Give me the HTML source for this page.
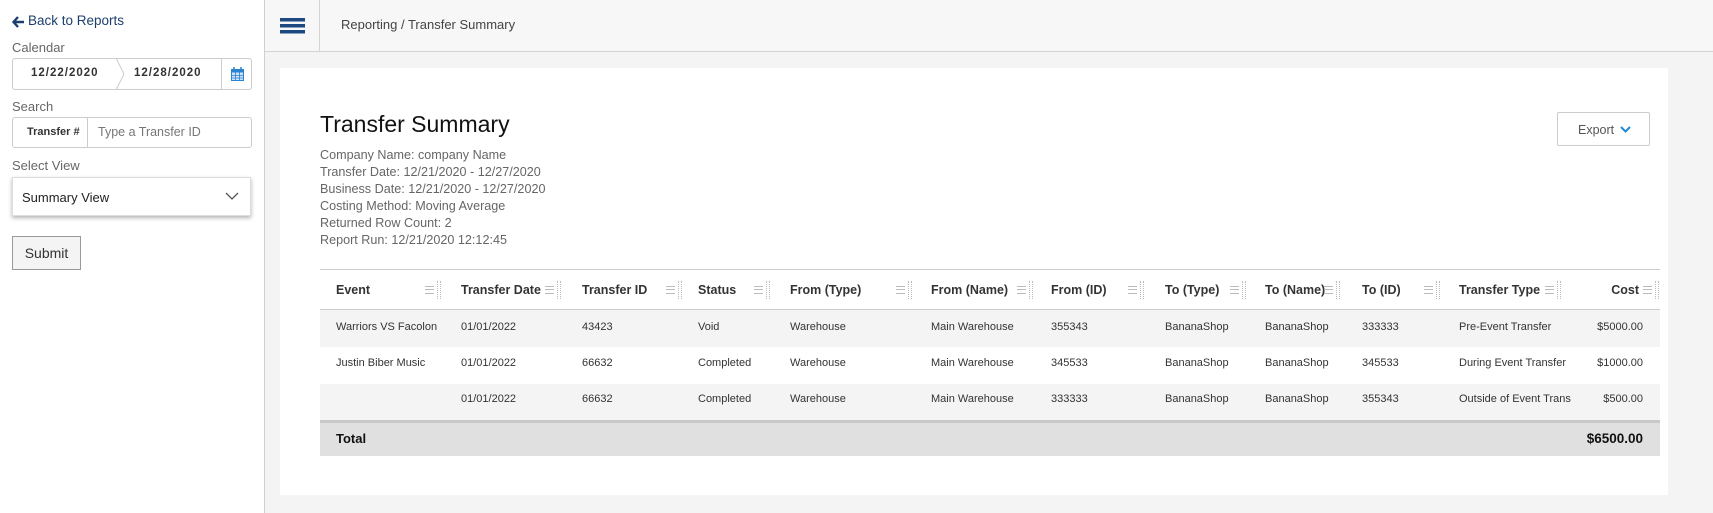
<!DOCTYPE html>
<html><head><meta charset="utf-8"><style>
*{box-sizing:border-box;margin:0;padding:0}
body{width:1713px;height:513px;overflow:hidden;background:#f4f4f4;font-family:"Liberation Sans",sans-serif;position:relative;color:#222}
.a{position:absolute;white-space:nowrap}
#side{position:absolute;left:0;top:0;width:265px;height:513px;background:#fff;border-right:1px solid #d0d0d0}
#top{position:absolute;left:265px;top:0;right:0;height:52px;background:#f7f7f7;border-bottom:1px solid #d4d4d4}
.lbl{font-size:13px;color:#666}
.box{border:1px solid #ccc;border-radius:3px;background:#fff}
.hd{font-size:12.5px;font-weight:bold;color:#333}
.cell{font-size:11px;color:#333}
.mi{position:absolute;width:9px;height:8px;border-top:1.5px solid #bbb;border-bottom:1.5px solid #bbb}
.mi:after{content:"";position:absolute;left:0;right:0;top:1.8px;border-top:1.5px solid #bbb}
.dt{position:absolute;width:4px;height:18px;border-left:1px dotted #bbb;border-right:1px dotted #bbb}
</style></head><body>
<div id="side">
 <svg class="a" style="left:12px;top:16px" width="13" height="12"><path d="M6 1L1.5 6 6 11M2 6h10" fill="none" stroke="#1c3f6e" stroke-width="2.4"/></svg>
 <div class="a" style="left:28px;top:13px;font-size:13.5px;color:#1c3f6e">Back to Reports</div>
 <div class="a lbl" style="left:12px;top:40px">Calendar</div>
 <div class="a box" style="left:12px;top:58px;width:240px;height:32px">
  <div class="a" style="left:18px;top:8px;font-size:11.5px;font-weight:bold;letter-spacing:1px;color:#333">12/22/2020</div>
  <svg class="a" style="left:102px;top:-1px" width="12" height="32"><path d="M1 0 L9 16 L1 32" fill="none" stroke="#ccc"/></svg>
  <div class="a" style="left:121px;top:8px;font-size:11.5px;font-weight:bold;letter-spacing:1px;color:#333">12/28/2020</div>
  <div class="a" style="left:208px;top:0;height:30px;border-left:1px solid #ccc;width:31px">
   <svg class="a" style="left:9px;top:8px" width="13" height="14"><rect x="0.5" y="2.5" width="12" height="11" fill="#cfe3f7" stroke="#2a83d0"/><rect x="0.5" y="2.5" width="12" height="3" fill="#2a83d0"/><path d="M4.5 5v9M8.5 5v9M1 8.5h12M1 11h12" stroke="#2a83d0" stroke-width="0.8"/><path d="M3 0v4M10 0v4" stroke="#2a83d0" stroke-width="1.5"/></svg>
  </div>
 </div>
 <div class="a lbl" style="left:12px;top:99px">Search</div>
 <div class="a box" style="left:12px;top:117px;width:240px;height:31px">
  <div class="a" style="left:14px;top:8px;font-size:11px;font-weight:bold;color:#333">Transfer #</div>
  <div class="a" style="left:74px;top:0;height:29px;border-left:1px solid #ccc"></div>
  <div class="a" style="left:85px;top:7px;font-size:12.5px;color:#777">Type a Transfer ID</div>
 </div>
 <div class="a lbl" style="left:12px;top:158px">Select View</div>
 <div class="a" style="left:12px;top:177px;width:239px;height:39px;background:#fff;border:1px solid #ddd;box-shadow:0 2px 4px rgba(0,0,0,.3)">
  <div class="a" style="left:9px;top:12px;font-size:13px;color:#222">Summary View</div>
  <svg class="a" style="left:212px;top:14px" width="14" height="9"><path d="M1 1l6 6 6-6" fill="none" stroke="#555" stroke-width="1.3"/></svg>
 </div>
 <div class="a" style="left:12px;top:236px;width:69px;height:34px;border:1px solid #999;background:#f4f4f4;font-size:14px;color:#333;text-align:center;line-height:32px">Submit</div>
</div>
<div id="top">
 <svg class="a" style="left:15px;top:18px" width="25" height="16"><rect y="0" width="25" height="3.5" fill="#1c4a80"/><rect y="6" width="25" height="3.5" fill="#1c4a80"/><rect y="12" width="25" height="3.5" fill="#1c4a80"/></svg>
 <div class="a" style="left:54px;top:0;height:51px;border-left:1px solid #d4d4d4"></div>
 <div class="a" style="left:76px;top:17px;font-size:13px;color:#444">Reporting / Transfer Summary</div>
</div>
<div class="a" style="left:280px;top:68px;width:1388px;height:427px;background:#fff"></div>
<div class="a" style="left:320px;top:111px;font-size:23px;color:#111">Transfer Summary</div>
<div class="a" style="left:320px;top:147px;font-size:12.6px;color:#666;line-height:17px">Company Name: company Name<br>Transfer Date: 12/21/2020 - 12/27/2020<br>Business Date: 12/21/2020 - 12/27/2020<br>Costing Method: Moving Average<br>Returned Row Count: 2<br>Report Run: 12/21/2020 12:12:45</div>
<div class="a" style="left:1557px;top:112px;width:93px;height:34px;border:1px solid #ccc;border-radius:2px;font-size:12.5px;color:#555;padding:10px 0 0 20px">Export <svg style="position:absolute;left:62px;top:13px" width="11" height="7"><path d="M1 1l4.5 4.5L10 1" fill="none" stroke="#1e88d6" stroke-width="2"/></svg></div>
<div class="a" style="left:320px;top:269px;width:1340px;border-top:1px solid #ccc"></div>
<div class="a" style="left:320px;top:309px;width:1340px;border-top:1px solid #ccc"></div>
<div class="a" style="left:320px;top:310px;width:1340px;height:37px;background:#f4f4f4"></div>
<div class="a" style="left:320px;top:384px;width:1340px;height:36px;background:#f4f4f4"></div>
<div class="a" style="left:320px;top:420px;width:1340px;height:36px;background:#e0e0e0;border-top:3px solid #c8c8c8"></div>
<div class="a hd" style="left:336px;top:283px">Event</div>
<div class="a hd" style="left:461px;top:283px">Transfer Date</div>
<div class="a hd" style="left:582px;top:283px">Transfer ID</div>
<div class="a hd" style="left:698px;top:283px">Status</div>
<div class="a hd" style="left:790px;top:283px">From (Type)</div>
<div class="a hd" style="left:931px;top:283px">From (Name)</div>
<div class="a hd" style="left:1051px;top:283px">From (ID)</div>
<div class="a hd" style="left:1165px;top:283px">To (Type)</div>
<div class="a hd" style="left:1265px;top:283px">To (Name)</div>
<div class="a hd" style="left:1362px;top:283px">To (ID)</div>
<div class="a hd" style="left:1459px;top:283px">Transfer Type</div>
<div class="a hd" style="left:1597px;top:283px;width:42px;text-align:right">Cost</div>
<div class="mi" style="left:425px;top:286px"></div><div class="dt" style="left:437px;top:281px"></div>
<div class="mi" style="left:545px;top:286px"></div><div class="dt" style="left:557px;top:281px"></div>
<div class="mi" style="left:666px;top:286px"></div><div class="dt" style="left:678px;top:281px"></div>
<div class="mi" style="left:754px;top:286px"></div><div class="dt" style="left:766px;top:281px"></div>
<div class="mi" style="left:896px;top:286px"></div><div class="dt" style="left:908px;top:281px"></div>
<div class="mi" style="left:1017px;top:286px"></div><div class="dt" style="left:1029px;top:281px"></div>
<div class="mi" style="left:1128px;top:286px"></div><div class="dt" style="left:1140px;top:281px"></div>
<div class="mi" style="left:1230px;top:286px"></div><div class="dt" style="left:1242px;top:281px"></div>
<div class="mi" style="left:1324px;top:286px"></div><div class="dt" style="left:1336px;top:281px"></div>
<div class="mi" style="left:1424px;top:286px"></div><div class="dt" style="left:1436px;top:281px"></div>
<div class="mi" style="left:1545px;top:286px"></div><div class="dt" style="left:1557px;top:281px"></div>
<div class="mi" style="left:1643px;top:286px"></div><div class="dt" style="left:1655px;top:281px"></div>
<div class="a cell" style="left:336px;top:321px">Warriors VS Facolon</div>
<div class="a cell" style="left:461px;top:321px">01/01/2022</div>
<div class="a cell" style="left:582px;top:321px">43423</div>
<div class="a cell" style="left:698px;top:321px">Void</div>
<div class="a cell" style="left:790px;top:321px">Warehouse</div>
<div class="a cell" style="left:931px;top:321px">Main Warehouse</div>
<div class="a cell" style="left:1051px;top:321px">355343</div>
<div class="a cell" style="left:1165px;top:321px">BananaShop</div>
<div class="a cell" style="left:1265px;top:321px">BananaShop</div>
<div class="a cell" style="left:1362px;top:321px">333333</div>
<div class="a cell" style="left:1459px;top:321px">Pre-Event Transfer</div>
<div class="a cell" style="left:1577px;top:321px;width:66px;text-align:right">$5000.00</div>
<div class="a cell" style="left:336px;top:357px">Justin Biber Music</div>
<div class="a cell" style="left:461px;top:357px">01/01/2022</div>
<div class="a cell" style="left:582px;top:357px">66632</div>
<div class="a cell" style="left:698px;top:357px">Completed</div>
<div class="a cell" style="left:790px;top:357px">Warehouse</div>
<div class="a cell" style="left:931px;top:357px">Main Warehouse</div>
<div class="a cell" style="left:1051px;top:357px">345533</div>
<div class="a cell" style="left:1165px;top:357px">BananaShop</div>
<div class="a cell" style="left:1265px;top:357px">BananaShop</div>
<div class="a cell" style="left:1362px;top:357px">345533</div>
<div class="a cell" style="left:1459px;top:357px">During Event Transfer</div>
<div class="a cell" style="left:1577px;top:357px;width:66px;text-align:right">$1000.00</div>
<div class="a cell" style="left:461px;top:393px">01/01/2022</div>
<div class="a cell" style="left:582px;top:393px">66632</div>
<div class="a cell" style="left:698px;top:393px">Completed</div>
<div class="a cell" style="left:790px;top:393px">Warehouse</div>
<div class="a cell" style="left:931px;top:393px">Main Warehouse</div>
<div class="a cell" style="left:1051px;top:393px">333333</div>
<div class="a cell" style="left:1165px;top:393px">BananaShop</div>
<div class="a cell" style="left:1265px;top:393px">BananaShop</div>
<div class="a cell" style="left:1362px;top:393px">355343</div>
<div class="a cell" style="left:1459px;top:393px;width:112px;overflow:hidden">Outside of Event Transfer</div>
<div class="a cell" style="left:1577px;top:393px;width:66px;text-align:right">$500.00</div>
<div class="a" style="left:336px;top:431px;font-size:13px;font-weight:bold;color:#111">Total</div>
<div class="a" style="left:1557px;top:431px;width:86px;text-align:right;font-size:13.5px;font-weight:bold;color:#111">$6500.00</div>
</body></html>
